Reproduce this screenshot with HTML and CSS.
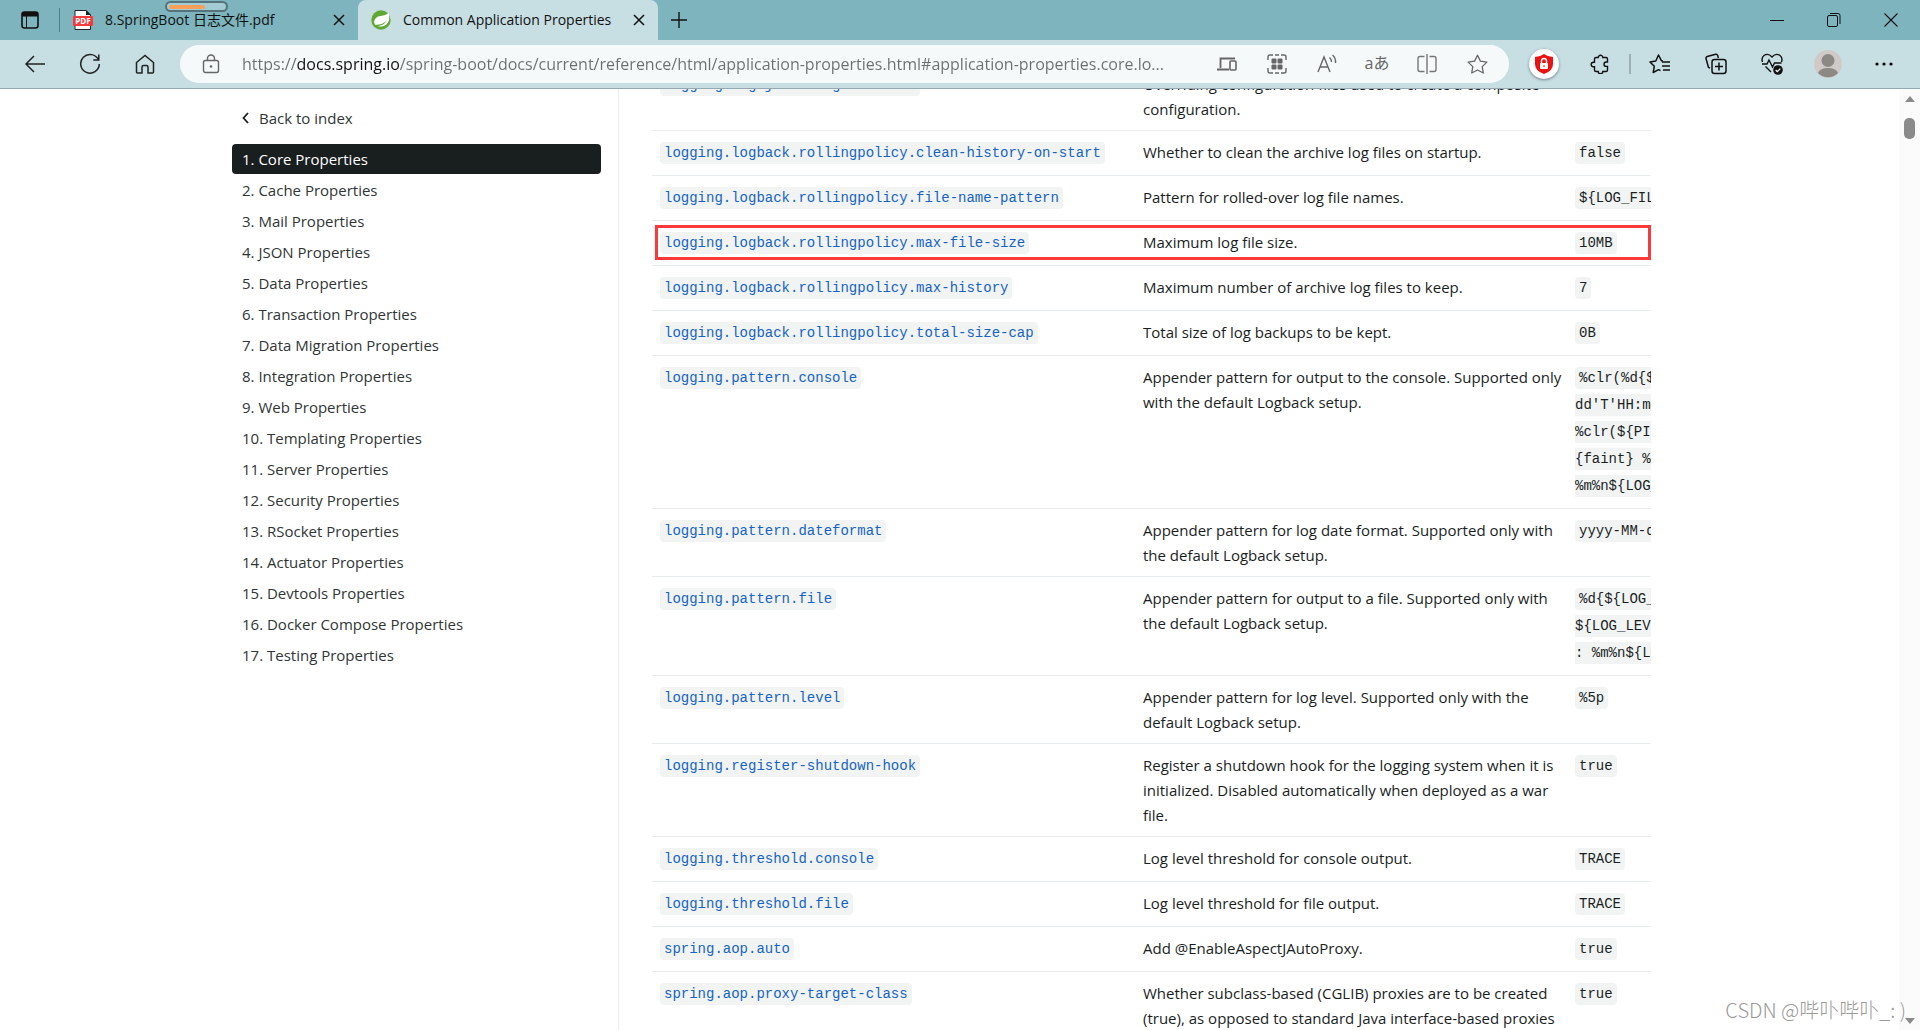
FILE: index.html
```html
<!DOCTYPE html>
<html lang="en">
<head>
<meta charset="utf-8">
<title>Common Application Properties</title>
<link rel="stylesheet" href="styles.css">
</head>
<body>
<header class="tabs">
  <button class="tab-menu" aria-label="Tab actions"><svg width="20" height="20" viewBox="0 0 20 20"><rect x="2" y="2" width="16" height="16" rx="2.5" fill="none" stroke="#111" stroke-width="1.6"/><path d="M2 6.500V4.500A2.500 2.500 0 0 1 4.500 2h11A2.500 2.500 0 0 1 18 4.500v2z" fill="#111"/><path d="M6.500 6v12" stroke="#111"/></svg></button>
  <span class="tabs-divider"></span>
  <div class="tab">
    <svg width="20" height="20" viewBox="0 0 20 20"><path d="M2 .5h11l4.500 4.500v14.500H2z" fill="#fff" stroke="#222"/><path d="M13 0v5h5z" fill="#222"/><rect x="0" y="6" width="20" height="10" rx="1" fill="#f33b3e"/><text x="10" y="14" class="pdf-label">PDF</text></svg>
    <span class="tab-title">8.SpringBoot 日志文件.pdf</span>
    <button class="tab-close" aria-label="Close tab"><svg width="12" height="12" viewBox="0 0 12 12"><path d="M1 1l10 10M11 1L1 11" stroke="#111" stroke-width="1.500"/></svg></button>
  </div>
  <div class="tab tab-active">
    <svg width="20" height="20" viewBox="0 0 20 20"><circle cx="10" cy="10" r="9.700" fill="#5fa834"/><path d="M17.600 2.200c1.300 5 1 9.500-2.200 12.200-2.800 2.400-7 2.200-10.600 1.900 5.200-.2 9.200-2 11-6.300-2.500 3.600-6.300 4.700-11.800 4.800-2-3.500-.2-7.200 4-8.500 3.600-1.100 7.500-.5 9.600-4.100z" fill="#fff"/></svg>
    <span class="tab-title">Common Application Properties</span>
    <button class="tab-close" aria-label="Close tab"><svg width="12" height="12" viewBox="0 0 12 12"><path d="M1 1l10 10M11 1L1 11" stroke="#111" stroke-width="1.500"/></svg></button>
  </div>
  <button class="tab-new" aria-label="New tab"><svg width="18" height="18" viewBox="0 0 18 18"><path d="M9 1v16M1 9h16" stroke="#111" stroke-width="1.400"/></svg></button>
  <div class="window-controls">
    <button aria-label="Minimize"><svg width="14" height="14" viewBox="0 0 14 14"><path d="M0 7.500h14" stroke="#111"/></svg></button>
    <button aria-label="Restore"><svg width="14" height="14" viewBox="0 0 14 14"><rect x=".5" y="2.500" width="10" height="11" rx="1.500" fill="none" stroke="#111"/><path d="M3 .5h8a2 2 0 0 1 2 2V11" fill="none" stroke="#111"/></svg></button>
    <button aria-label="Close"><svg width="14" height="14" viewBox="0 0 14 14"><path d="M.5.5l13 13M13.500.5l-13 13" stroke="#111" stroke-width="1.100"/></svg></button>
  </div>
  <span class="progress-pill"><span></span></span>
</header>

<nav class="toolbar" aria-label="Browser">
  <button aria-label="Back"><svg width="22" height="20" viewBox="0 0 22 20"><path d="M10 2L2 10l8 8M2 10h19" fill="none" stroke="#222" stroke-width="1.500"/></svg></button>
  <button aria-label="Refresh"><svg width="22" height="22" viewBox="0 0 22 22"><path d="M19.500 7A9.300 9.300 0 1 0 20.300 11M19.800 1.500V7h-5.500" fill="none" stroke="#222" stroke-width="1.500"/></svg></button>
  <button aria-label="Home"><svg width="20" height="20" viewBox="0 0 20 20"><path d="M1.500 8.500L10 1.500l8.500 7V18q0 1-1 1H13v-6q0-1.500-1.500-1.500h-3Q7 11.500 7 13v6H2.500q-1 0-1-1z" fill="none" stroke="#222" stroke-width="1.500"/></svg></button>
  <div class="address">
    <button class="site-info" aria-label="Site information"><svg width="18" height="20" viewBox="0 0 18 20"><rect x="1.500" y="6.500" width="15" height="12" rx="2" fill="none" stroke="#666" stroke-width="1.400"/><path d="M5.500 6.500V4.500a3.500 3.500 0 0 1 7 0v2" fill="none" stroke="#666" stroke-width="1.400"/><circle cx="9" cy="12.500" r="1.300" fill="#666"/></svg></button>
    <input class="url" type="text" aria-label="Address" value="https://docs.spring.io/spring-boot/docs/current/reference/html/application-properties.html#application-properties.core.lo...">
    <button aria-label="Send to device"><svg width="20" height="16" viewBox="0 0 20 16"><path d="M3.500 12V2.500H18M0 13.500h12" fill="none" stroke="#666" stroke-width="1.800"/><rect x="13" y="5" width="6" height="9" rx="1" fill="none" stroke="#666" stroke-width="1.600"/></svg></button>
    <button aria-label="Apps"><svg width="20" height="20" viewBox="0 0 20 20"><path d="M1 6V3q0-2 2-2h3M14 1h3q2 0 2 2v3M19 14v3q0 2-2 2h-3M6 19H3q-2 0-2-2v-3M8 1h4M8 19h4" fill="none" stroke="#666" stroke-width="1.400"/><rect x="4.500" y="4.500" width="5" height="5" rx="1" fill="#666"/><rect x="10.500" y="4.500" width="5" height="5" rx="1" fill="#666"/><rect x="4.500" y="10.500" width="5" height="5" rx="1" fill="#666"/><rect x="10.500" y="10.500" width="5" height="5" rx="1" fill="#666"/></svg></button>
    <button aria-label="Read aloud"><svg width="20" height="20" viewBox="0 0 20 20"><path d="M1 18L7 3l6 15M3 13h8M12.500 3.500q2 1.500 2 4.500M15.500 1q3.500 3 3 8" fill="none" stroke="#666" stroke-width="1.400"/></svg></button>
    <button class="translate" aria-label="Translate">aあ</button>
    <button aria-label="Split screen"><svg width="20" height="20" viewBox="0 0 20 20"><path d="M7.500 2.500H3q-2 0-2 2v11q0 2 2 2h4.500M12.500 2.500H17q2 0 2 2v11q0 2-2 2h-4.500M10 0v20" fill="none" stroke="#777" stroke-width="1.400"/></svg></button>
    <button aria-label="Add to favorites"><svg width="21" height="20" viewBox="0 0 21 20"><path d="M10.500 1.200l2.900 5.900 6.500 1-4.700 4.500 1.100 6.400-5.800-3-5.800 3 1.100-6.400L1.100 8.100l6.500-1z" fill="none" stroke="#666" stroke-width="1.300" stroke-linejoin="round"/></svg></button>
  </div>
  <div class="tools">
    <button aria-label="Ad blocker"><span class="badge"><svg width="18" height="20" viewBox="0 0 18 20"><path d="M9 0q4 3 9 3v7q0 7-9 10Q0 17 0 10V3q5 0 9-3z" fill="#ea1212"/><rect x="5" y="9" width="8" height="6" rx="1" fill="#fff"/><path d="M6.500 9V7a2.500 2.500 0 0 1 5 0v2" fill="none" stroke="#fff" stroke-width="1.400"/><path d="M9 11v2" stroke="#ea1212"/></svg></span></button>
    <button aria-label="Extensions"><svg width="20" height="20" viewBox="0 0 20 20"><path d="M6 3.500h2.200a2.300 2.300 0 0 1 4.600 0H16q1.500 0 1.500 1.500v3h-1.300a2.200 2.200 0 0 0 0 4.400h1.300V16q0 1.500-1.500 1.500h-3.200a2.300 2.300 0 0 1-4.600 0H6Q4.500 17.500 4.500 16v-3.200h-1a2.300 2.300 0 0 1 0-4.600h1V5Q4.500 3.500 6 3.500z" fill="none" stroke="#111" stroke-width="1.400"/></svg></button>
    <span class="tools-divider"></span>
    <button aria-label="Favorites"><svg width="22" height="20" viewBox="0 0 22 20"><path d="M14 7l-1.500-.2L9.500 1 6.800 7 1 8l4.300 4.300L4.200 18.500l5.300-2.800 2 1M13 8h8M13 12h8M14 16h7" fill="none" stroke="#111" stroke-width="1.500" stroke-linejoin="round"/></svg></button>
    <button aria-label="Collections"><svg width="22" height="22" viewBox="0 0 22 22"><path d="M5 15l-1.500-.5L1 5.500Q.8 4 2.200 3.500l8.500-2.300q1.500-.3 2 1.200l.6 2.600" fill="none" stroke="#111" stroke-width="1.500"/><rect x="7" y="6.500" width="14" height="14" rx="2.500" fill="none" stroke="#111" stroke-width="1.500"/><path d="M14 9.500v8M10 13.500h8" stroke="#111" stroke-width="1.500"/></svg></button>
    <button aria-label="Browser essentials"><svg width="22" height="22" viewBox="0 0 22 22"><path d="M1.500 9Q0 5 3 2.500 7-.3 11 4q4-4.300 8-1.500Q22 5 20.500 9M4.500 13.500l5.500 5.500M1 11h5l2-4 3.500 7 2-4h7" fill="none" stroke="#111" stroke-width="1.400"/><circle cx="17" cy="17" r="4.800" fill="#111"/><path d="M14.700 17l1.600 1.600 3-3" fill="none" stroke="#fff" stroke-width="1.200"/></svg></button>
    <button aria-label="Profile"><svg width="28" height="28" viewBox="0 0 28 28"><circle cx="14" cy="14" r="14" fill="#cfcac7"/><circle cx="14" cy="10.500" r="6.500" fill="#8c8884"/><path d="M4 23q2-5 10-5t10 5a14 14 0 0 1-20 0z" fill="#8c8884"/></svg></button>
    <button aria-label="Settings and more"><svg width="18" height="4" viewBox="0 0 18 4"><circle cx="2" cy="2" r="1.600"/><circle cx="9" cy="2" r="1.600"/><circle cx="16" cy="2" r="1.600"/></svg></button>
  </div>
</nav>

<div class="page">
  <aside class="sidebar">
    <a class="back" href="#index"><svg width="7" height="12" viewBox="0 0 7 12"><path d="M6 1L1.500 6 6 11" fill="none" stroke="#191e1e" stroke-width="1.800"/></svg>Back to index</a>
    <ul class="toc">
      <li><a class="current" href="#core">1. Core Properties</a></li>
      <li><a href="#cache">2. Cache Properties</a></li>
      <li><a href="#mail">3. Mail Properties</a></li>
      <li><a href="#json">4. JSON Properties</a></li>
      <li><a href="#data">5. Data Properties</a></li>
      <li><a href="#transaction">6. Transaction Properties</a></li>
      <li><a href="#data-migration">7. Data Migration Properties</a></li>
      <li><a href="#integration">8. Integration Properties</a></li>
      <li><a href="#web">9. Web Properties</a></li>
      <li><a href="#templating">10. Templating Properties</a></li>
      <li><a href="#server">11. Server Properties</a></li>
      <li><a href="#security">12. Security Properties</a></li>
      <li><a href="#rsocket">13. RSocket Properties</a></li>
      <li><a href="#actuator">14. Actuator Properties</a></li>
      <li><a href="#devtools">15. Devtools Properties</a></li>
      <li><a href="#docker-compose">16. Docker Compose Properties</a></li>
      <li><a href="#testing">17. Testing Properties</a></li>
    </ul>
  </aside>
  <main class="content">
    <table class="properties">
      <colgroup><col class="col-name"><col class="col-description"><col></colgroup>
      <tbody>
        <tr><td><a href="#p1"><code>logging.log4j2.config.override</code></a></td><td>Overriding configuration files used to create a composite configuration.</td><td></td></tr>
        <tr><td><a href="#p2"><code>logging.logback.rollingpolicy.clean-history-on-start</code></a></td><td>Whether to clean the archive log files on startup.</td><td><code>false</code></td></tr>
        <tr><td><a href="#p3"><code>logging.logback.rollingpolicy.file-name-pattern</code></a></td><td>Pattern for rolled-over log file names.</td><td><code>${LOG_FILE}.%d</code></td></tr>
        <tr><td><a href="#p4"><code>logging.logback.rollingpolicy.max-file-size</code></a></td><td>Maximum log file size.</td><td><code>10MB</code></td></tr>
        <tr><td><a href="#p5"><code>logging.logback.rollingpolicy.max-history</code></a></td><td>Maximum number of archive log files to keep.</td><td><code>7</code></td></tr>
        <tr><td><a href="#p6"><code>logging.logback.rollingpolicy.total-size-cap</code></a></td><td>Total size of log backups to be kept.</td><td><code>0B</code></td></tr>
        <tr><td><a href="#p7"><code>logging.pattern.console</code></a></td><td>Appender pattern for output to the console. Supported only with the default Logback setup.</td><td><code>%clr(%d{${LOG_<br>dd'T'HH:mm:ss<br>%clr(${PID:- })<br>{faint} %clr(<br>%m%n${LOG_EXC</code></td></tr>
        <tr><td><a href="#p8"><code>logging.pattern.dateformat</code></a></td><td>Appender pattern for log date format. Supported only with the default Logback setup.</td><td><code>yyyy-MM-dd'T'</code></td></tr>
        <tr><td><a href="#p9"><code>logging.pattern.file</code></a></td><td>Appender pattern for output to a file. Supported only with the default Logback setup.</td><td><code>%d{${LOG_DATE<br>${LOG_LEVEL_P<br>: %m%n${LOG_EX</code></td></tr>
        <tr><td><a href="#p10"><code>logging.pattern.level</code></a></td><td>Appender pattern for log level. Supported only with the default Logback setup.</td><td><code>%5p</code></td></tr>
        <tr><td><a href="#p11"><code>logging.register-shutdown-hook</code></a></td><td>Register a shutdown hook for the logging system when it is initialized. Disabled automatically when deployed as a war file.</td><td><code>true</code></td></tr>
        <tr><td><a href="#p12"><code>logging.threshold.console</code></a></td><td>Log level threshold for console output.</td><td><code>TRACE</code></td></tr>
        <tr><td><a href="#p13"><code>logging.threshold.file</code></a></td><td>Log level threshold for file output.</td><td><code>TRACE</code></td></tr>
        <tr><td><a href="#p14"><code>spring.aop.auto</code></a></td><td>Add @EnableAspectJAutoProxy.</td><td><code>true</code></td></tr>
        <tr><td><a href="#p15"><code>spring.aop.proxy-target-class</code></a></td><td>Whether subclass-based (CGLIB) proxies are to be created (true), as opposed to standard Java interface-based proxies (false).</td><td><code>true</code></td></tr>
      </tbody>
    </table>
    <span class="marker"></span>
  </main>
  <div class="scrollbar"><span class="arrow-up"></span><span class="thumb"></span><span class="arrow-down"></span></div>
</div>
<span class="watermark">CSDN @哔卟哔卟_: )</span>
</body>
</html>
```
FILE: styles.css
```css
* { box-sizing: border-box; }

body {
  margin: 0;
  height: 100vh;
  display: flex;
  flex-direction: column;
  overflow: hidden;
  position: relative;
  background: #fff;
  color: #191e1e;
  font: 15px/25px "Open Sans", "Noto Sans CJK SC", sans-serif;
}

a { text-decoration: none; color: inherit; }

button {
  display: flex;
  align-items: center;
  justify-content: center;
  flex: none;
  border: 0;
  padding: 0;
  background: none;
  font: inherit;
}

/* Tab strip */
.tabs {
  display: flex;
  height: 40px;
  flex: none;
  position: relative;
  background: #7db4be;
  font-size: 14px;
  color: #111;
}
.tab-menu { width: 59px; }
.tabs-divider { width: 1px; height: 24px; margin-top: 8px; background: #4f7f89; }
.tab {
  display: flex;
  align-items: center;
  width: 298px;
  padding: 0 12px 0 13px;
}
.tab svg { flex: none; }
.tab-title { flex: 1; padding: 0 0 2px 12px; white-space: nowrap; }
.tab-active {
  width: 300px;
  background: #c7dee3;
  border-radius: 8px 8px 0 0;
}
.tab-close { width: 14px; height: 14px; }
.tab-new { width: 42px; }
.pdf-label { font: bold 8px "Open Sans", sans-serif; fill: #fff; text-anchor: middle; }
.window-controls { display: flex; margin: 0 1px 0 auto; }
.window-controls button { width: 57px; }
.progress-pill {
  position: absolute;
  left: 165px;
  top: 1px;
  width: 63px;
  height: 11px;
  padding: 2px;
  border: 2px solid #55737b;
  border-radius: 6px;
  background: #a3cbd3;
}
.progress-pill span { display: block; width: 36px; height: 4px; border-radius: 2px; background: #f7a05a; }

/* Address row */
.toolbar {
  display: flex;
  align-items: center;
  height: 49px;
  flex: none;
  padding: 0 8px 0 7px;
  background: #c7dee3;
  border-bottom: 1px solid #94a9b1;
}
.toolbar button { width: 55px; height: 38px; }
.address {
  display: flex;
  flex: 1;
  min-width: 0;
  height: 38px;
  margin: 0 7px 0 8px;
  padding-right: 7px;
  border-radius: 19px;
  background: #f5f9fa;
}
.toolbar .address button { width: 50px; }
.toolbar .address .site-info { width: 62px; }
.url {
  flex: 1;
  min-width: 0;
  height: 38px;
  padding: 0;
  border: 0;
  outline: 0;
  font: 16px/38px "Open Sans", sans-serif;
  color: transparent;
  background: linear-gradient(90deg, #6b6f70 54px, #111 54px, #111 158px, #6b6f70 158px);
  -webkit-background-clip: text;
  background-clip: text;
}
.toolbar .translate { padding-bottom: 2px; color: #666; font-size: 16px; }
.tools { display: flex; align-items: center; }
.toolbar .tools button { width: 56px; }
.tools-divider { width: 2px; height: 20px; margin: 0 1px; background: #9cb0b5; }
.badge {
  display: flex;
  align-items: center;
  justify-content: center;
  width: 30px;
  height: 30px;
  border-radius: 50%;
  background: #fff;
  box-shadow: 0 1px 3px #6d8388;
}

/* Document */
.page {
  display: flex;
  flex: 1;
  min-height: 0;
  overflow: hidden;
  padding-left: 232px;
}
.sidebar {
  flex: none;
  width: 387px;
  padding: 16px 17px 0 0;
  border-right: 1px solid #e6efee;
  color: #303636;
}
.back {
  display: flex;
  align-items: center;
  gap: 10px;
  height: 26px;
  padding-left: 10px;
}
.toc {
  display: flex;
  flex-direction: column;
  gap: 1px;
  margin: 13px 0 0;
  padding: 0;
  list-style: none;
}
.toc a { display: block; height: 30px; padding-left: 10px; line-height: 30px; border-radius: 4px; }
.toc .current { background: #191e1e; color: #fff; }

.content {
  position: relative;
  flex: 1;
  min-width: 0;
  margin: 0 248px 0 33px;
  overflow: hidden;
}
.properties {
  width: 1200px;
  margin-top: -26px;
  table-layout: fixed;
  border-collapse: separate;
  border-spacing: 0;
}
.col-name { width: 482px; }
.col-description { width: 433px; }
.properties td {
  padding: 9px 8px 8px;
  border-bottom: 1px solid #e9eced;
  vertical-align: top;
}
.properties td:nth-child(2) { padding: 9px 4px 8px 9px; }
.properties td:first-child,
.properties td:last-child {
  font: 14px/27px "Liberation Mono", monospace;
}
.properties code {
  padding: 3px 4px;
  border-radius: 4px;
  background: #f2f4f4;
  font: inherit;
  white-space: nowrap;
}
.properties a { color: #1563c4; }
.marker {
  position: absolute;
  left: 3px;
  right: 0;
  top: 136px;
  height: 35px;
  border: 3px solid #fb383a;
}

/* Scrollbar */
.scrollbar {
  display: flex;
  flex-direction: column;
  align-items: center;
  flex: none;
  width: 21px;
  padding: 7px 0 6px;
  background: #fbfbfb;
}
.arrow-up, .arrow-down { border: 5px solid transparent; }
.arrow-up { border-top: 0; border-bottom: 6px solid #8a8a8a; }
.arrow-down { border-bottom: 0; border-top: 6px solid #8a8a8a; margin-top: auto; }
.thumb { width: 11px; height: 21px; margin-top: 16px; border-radius: 5px; background: #8a8a8a; }

.watermark {
  position: absolute;
  right: 14px;
  bottom: 6px;
  font: 300 20px/28px "Noto Sans CJK SC", sans-serif;
  color: #999;
  text-shadow: 1px 1px 0 #fff;
  white-space: nowrap;
}
```
